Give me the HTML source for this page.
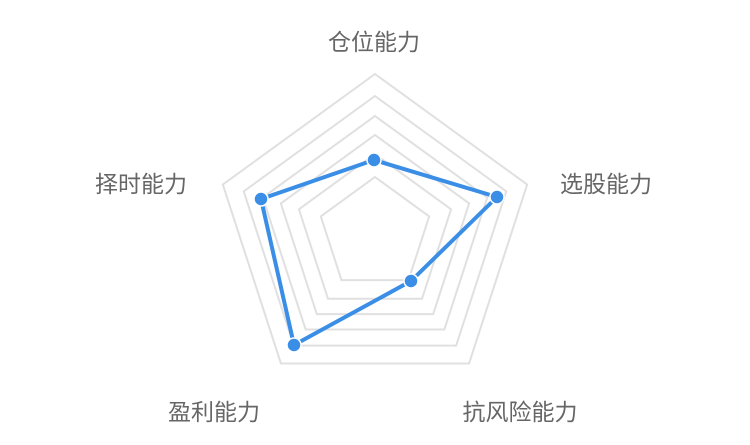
<!DOCTYPE html>
<html><head><meta charset="utf-8"><style>
html,body{margin:0;padding:0;background:#fff;width:750px;height:445px;overflow:hidden}
svg{display:block}
text{font-family:"Liberation Sans","Noto Sans CJK SC",sans-serif;font-size:23px;fill:#666}
</style></head><body>
<svg width="750" height="445" viewBox="0 0 750 445">
<g fill="none" stroke="#e0e0e0" stroke-width="2">
<polygon points="0,-1 0.9511,-0.309 0.5878,0.809 -0.5878,0.809 -0.9511,-0.309" vector-effect="non-scaling-stroke" transform="translate(375,234) scale(160)"/>
<polygon points="0,-1 0.9511,-0.309 0.5878,0.809 -0.5878,0.809 -0.9511,-0.309" vector-effect="non-scaling-stroke" transform="translate(375,234) scale(138)"/>
<polygon points="0,-1 0.9511,-0.309 0.5878,0.809 -0.5878,0.809 -0.9511,-0.309" vector-effect="non-scaling-stroke" transform="translate(375,234) scale(118)"/>
<polygon points="0,-1 0.9511,-0.309 0.5878,0.809 -0.5878,0.809 -0.9511,-0.309" vector-effect="non-scaling-stroke" transform="translate(375,234) scale(99)"/>
<polygon points="0,-1 0.9511,-0.309 0.5878,0.809 -0.5878,0.809 -0.9511,-0.309" vector-effect="non-scaling-stroke" transform="translate(375,234) scale(80)"/>
<polygon points="0,-1 0.9511,-0.309 0.5878,0.809 -0.5878,0.809 -0.9511,-0.309" vector-effect="non-scaling-stroke" transform="translate(375,234) scale(57)"/>
</g>
<polygon points="374,160 497,197 411,281 294,345 261,199" fill="none" stroke="#3a8ee6" stroke-width="4" stroke-linejoin="round"/>
<g fill="#3a8ee6" stroke="#fff" stroke-width="1.5">
<circle cx="374" cy="160" r="7"/><circle cx="497" cy="197" r="7"/><circle cx="411" cy="281" r="7"/><circle cx="294" cy="345" r="7"/><circle cx="261" cy="199" r="7"/>
</g>
<text x="374" y="50" text-anchor="middle">仓位能力</text>
<text x="560" y="192">选股能力</text>
<text x="95" y="192">择时能力</text>
<text x="214" y="420" text-anchor="middle">盈利能力</text>
<text x="520" y="420" text-anchor="middle">抗风险能力</text>
</svg>
</body></html>
